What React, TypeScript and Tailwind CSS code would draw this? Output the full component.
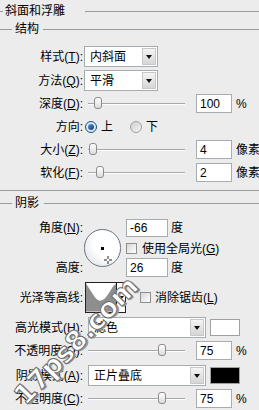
import React from "react";

const FONT = "font-['Liberation_Sans','Noto_Sans_CJK_SC',sans-serif]";

function Label({ children }: { children: React.ReactNode }) {
  return <div className="w-[83px] shrink-0 whitespace-nowrap text-right">{children}</div>;
}

function Select({ value, width }: { value: string; width: string }) {
  return (
    <div className={`flex h-[21px] shrink-0 ${width} items-stretch border border-[#a5acb2] bg-white`}>
      <div className="flex flex-1 items-center whitespace-nowrap pl-[5px]">{value}</div>
      <div className="m-[1px] flex w-[14px] items-center justify-center border border-[#c8c8c8] bg-gradient-to-b from-[#f4f4f4] to-[#d6d6d6]">
        <div className="h-0 w-0 border-x-[3px] border-t-[4px] border-x-transparent border-t-[#111]" />
      </div>
    </div>
  );
}

function NumInput({ value, h = "h-[19px]", w = "w-[36px]" }: { value: string; h?: string; w?: string }) {
  return (
    <div className={`flex shrink-0 ${h} ${w} items-center border border-[#a5acb2] bg-white pl-[3px]`}>{value}</div>
  );
}

function Slider({ pos }: { pos: number }) {
  return (
    <div className="relative h-[13px] w-[97px] shrink-0">
      <div className="absolute inset-x-0 top-[6px] h-px bg-[#a8a8a8]" />
      <div className="absolute inset-x-0 top-[7px] h-px bg-white" />
      <div
        className="absolute top-0 h-[12px] w-[8px] rounded-[3px] border border-[#8c8c8c] bg-gradient-to-b from-white to-[#dcdcdc]"
        style={{ left: pos }}
      />
    </div>
  );
}

function Checkbox() {
  return <div className="h-[11px] w-[11px] shrink-0 border border-[#8f8f8f] bg-gradient-to-br from-[#d8d8d8] to-white" />;
}

function Radio({ checked }: { checked?: boolean }) {
  return checked ? (
    <div className="flex h-[12px] w-[12px] items-center justify-center rounded-full border border-[#1c5180] bg-[#dbe8f5]">
      <div className="h-[6px] w-[6px] rounded-full bg-gradient-to-br from-[#4f9ad8] to-[#0d3a6a]" />
    </div>
  ) : (
    <div className="h-[12px] w-[12px] rounded-full border border-[#a0a0a0] bg-gradient-to-br from-[#cfcfcf] to-[#f6f6f6]" />
  );
}

function Section({ title, gap }: { title: string; gap: string }) {
  return (
    <div className="flex h-[16px] items-center">
      <div className="h-px w-[12px] bg-[#9a9a9a]" />
      <span className="ml-[3px]">{title}</span>
      <div className={`h-px flex-1 bg-[#9a9a9a] ${gap}`} />
    </div>
  );
}

function SliderRow({ label, pos, value, unit }: { label: React.ReactNode; pos: number; value: string; unit: string }) {
  return (
    <div className="flex h-[19px] items-center">
      <Label>{label}</Label>
      <div className="ml-[5px] shrink-0">
        <Slider pos={pos} />
      </div>
      <div className="ml-[11px] shrink-0">
        <NumInput value={value} />
      </div>
      <span className="ml-[4px] shrink-0 whitespace-nowrap">{unit}</span>
    </div>
  );
}

export default function App() {
  return (
    <div className={`relative h-[410px] w-[259px] overflow-hidden bg-[#ececec] text-[12px] leading-none text-black ${FONT}`}>
      {/* 斜面和浮雕 */}
      <div className="mt-[3px] flex h-[16px] items-center">
        <div className="h-px w-[3px] bg-[#9a9a9a]" />
        <span className="ml-[2px]">斜面和浮雕</span>
        <div className="ml-[20px] h-px flex-1 bg-[#9a9a9a]" />
      </div>

      <div className="mt-[2px]">
        <Section title="结构" gap="ml-[4px]" />
      </div>

      <div className="mt-[9px] flex h-[21px] items-center">
        <Label>
          样式(<u>T</u>):
        </Label>
        <div className="ml-[1px]">
          <Select value="内斜面" width="w-[74px]" />
        </div>
      </div>

      <div className="mt-[3px] flex h-[21px] items-center">
        <Label>
          方法(<u>Q</u>):
        </Label>
        <div className="ml-[1px]">
          <Select value="平滑" width="w-[74px]" />
        </div>
      </div>

      <div className="mt-[3px]">
        <SliderRow label={<>深度(<u>D</u>):</>} pos={6} value="100" unit="%" />
      </div>

      <div className="mt-[5px] flex h-[18px] items-center">
        <Label>方向:</Label>
        <div className="ml-[2px]">
          <Radio checked />
        </div>
        <span className="ml-[4px]">上</span>
        <div className="ml-[17px]">
          <Radio />
        </div>
        <span className="ml-[4px]">下</span>
      </div>

      <div className="mt-[4px]">
        <SliderRow label={<>大小(<u>Z</u>):</>} pos={1} value="4" unit="像素" />
      </div>
      <div className="mt-[4px]">
        <SliderRow label={<>软化(<u>F</u>):</>} pos={8} value="2" unit="像素" />
      </div>

      <div className="mt-[8px] h-px bg-[#9a9a9a]" />

      {/* 阴影 */}
      <div className="mt-[4px]">
        <Section title="阴影" gap="ml-[5px]" />
      </div>

      <div className="mt-[8px] flex h-[58px]">
        <div className="flex w-[83px] flex-col justify-between">
          <div className="flex h-[18px] items-center justify-end">
            角度(<u>N</u>):
          </div>
          <div className="flex h-[19px] items-center justify-end">高度:</div>
        </div>
        <div className="relative ml-[1px] mt-[10px] h-[38px] w-[37px] rounded-full border-[1.5px] border-[#6a7384] bg-[radial-gradient(circle_at_65%_35%,#ffffff_45%,#d9dbe0_100%)]">
          <div className="absolute left-[16px] top-[17px] h-[3px] w-[3px] bg-black" />
          <svg className="absolute left-[19px] top-[26px]" width="8" height="8" viewBox="0 0 8 8">
            <path d="M4 0v8M0 4h8" stroke="#222" strokeWidth="1" />
            <path d="M3 3h2v2H3z" fill="#fff" />
          </svg>
        </div>
        <div className="ml-[5px] flex flex-col">
          <div className="flex h-[18px] items-center">
            <NumInput value="-66" w="w-[42px]" h="h-[18px]" />
            <span className="ml-[3px]">度</span>
          </div>
          <div className="mt-[6px] flex h-[11px] items-center">
            <Checkbox />
            <span className="ml-[5px] whitespace-nowrap">
              使用全局光(<u>G</u>)
            </span>
          </div>
          <div className="mt-[4px] flex h-[19px] items-center">
            <NumInput value="26" w="w-[42px]" />
            <span className="ml-[3px]">度</span>
          </div>
        </div>
      </div>

      <div className="mt-[5px] flex h-[31px] items-center">
        <Label>光泽等高线:</Label>
        <div className="ml-[2px] flex h-[31px] w-[41px] shrink-0 border border-[#222] bg-white">
          <svg width="31" height="29" viewBox="0 0 31 29" className="border-r border-[#222]">
            <path d="M0 0 L9 14 Q14 21 20 15 Q24 10 28 3 L31 0 V29 H0 Z" fill="#8e8e8e" />
          </svg>
          <div className="flex flex-1 items-center justify-center">
            <div className="h-0 w-0 border-x-[3px] border-t-[4px] border-x-transparent border-t-[#111]" />
          </div>
        </div>
        <div className="ml-[14px]">
          <Checkbox />
        </div>
        <span className="ml-[4px] whitespace-nowrap">
          消除锯齿(<u>L</u>)
        </span>
      </div>

      <div className="mt-[4px] flex h-[21px] items-center">
        <Label>
          高光模式(<u>H</u>):
        </Label>
        <div className="ml-[5px]">
          <Select value="滤色" width="w-[118px]" />
        </div>
        <div className="ml-[4px] h-[17px] w-[30px] shrink-0 border border-[#a0a0a0] bg-white" />
      </div>

      <div className="mt-[3px]">
        <SliderRow label={<>不透明度(<u>O</u>):</>} pos={70} value="75" unit="%" />
      </div>

      <div className="mt-[5px] flex h-[21px] items-center">
        <Label>
          阴影模式(<u>A</u>):
        </Label>
        <div className="ml-[5px]">
          <Select value="正片叠底" width="w-[118px]" />
        </div>
        <div className="ml-[4px] h-[17px] w-[30px] shrink-0 border border-[#a0a0a0] bg-black" />
      </div>

      <div className="mt-[3px]">
        <SliderRow label={<>不透明度(<u>C</u>):</>} pos={70} value="75" unit="%" />
      </div>

      {/* watermark */}
      <div className="pointer-events-none absolute left-[-24px] top-[327px] w-[200px] -rotate-[46deg] text-center font-['DejaVu_Sans',sans-serif] text-[27px] font-bold text-white [-webkit-text-stroke:1px_#6b6b6b] [text-shadow:1px_2px_0_#9a9a9a]">
        17ps8.com
      </div>
    </div>
  );
}
